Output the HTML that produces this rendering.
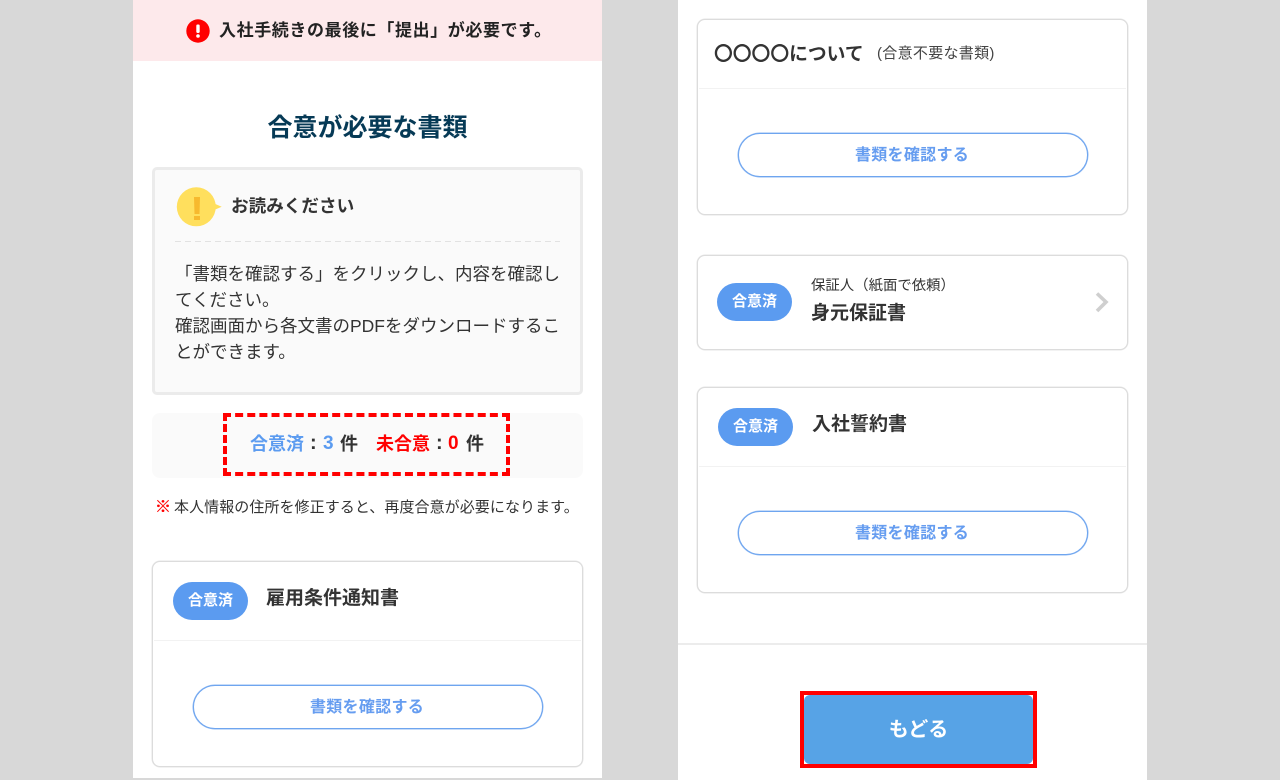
<!DOCTYPE html>
<html lang="ja"><head><meta charset="utf-8">
<style>
html,body{margin:0;padding:0;width:1280px;height:780px;overflow:hidden;background:#d8d8d8}
body{font-family:"Liberation Sans","Noto Sans CJK JP",sans-serif;color:#333;position:relative}
div,span.a{box-sizing:border-box}
.a{position:absolute;white-space:nowrap}
.panel{position:absolute;background:#fff;width:469px}
.card{position:absolute;border:1px solid #dcdcdc;box-shadow:0 0 0 .5px #e6e6e6;border-radius:8px;background:#fff;width:431px}
.line{position:absolute;height:1px;background:#f2f2f2}
.pill{position:absolute;width:75px;height:38px;border-radius:19px;background:#5b9bf0;color:#fff;font-weight:700;font-size:15px;line-height:37px;text-align:center}
.btn{position:absolute;width:350px;height:44px;border:1px solid #6ea5ef;box-shadow:0 0 0 .5px #8fb9f3;border-radius:22px;background:#fff;color:#669df0;font-weight:700;font-size:16px;letter-spacing:.3px;line-height:43px;text-align:center;padding-right:2px}
.t{font-weight:700;font-size:19px;line-height:26px;color:#333}
.s{font-size:18px;font-weight:700;line-height:26px;top:431px}
</style></head><body>

<div class="panel" style="left:133px;top:0;height:778px"></div>
<div class="panel" style="left:678px;top:0;height:780px"></div>

<!-- LEFT -->
<div class="a" style="left:133px;top:0;width:469px;height:61px;background:#fde9eb"></div>
<svg class="a" style="left:186px;top:19px" width="24" height="24" viewBox="0 0 24 24"><circle cx="12" cy="12" r="11.7" fill="#f00"/><rect x="10.300" y="5.500" width="3.400" height="8.500" rx="1.200" fill="#fff"/><circle cx="12" cy="17" r="1.800" fill="#fff"/></svg>
<div class="a" style="left:219px;top:18px;font-size:17px;font-weight:700;line-height:26px;color:#222;letter-spacing:.6px">入社手続きの最後に「提出」が必要です。</div>

<div class="a" style="left:133px;top:111px;width:469px;text-align:center;font-size:25px;font-weight:700;line-height:34px;color:#063a56">合意が必要な書類</div>

<div class="a" style="left:152px;top:167px;width:431px;height:228px;background:#fafafa;border:3px solid #ebebeb;border-radius:5px"></div>
<svg class="a" style="left:176px;top:187px" width="46" height="40" viewBox="0 0 46 40"><circle cx="20.300" cy="19.800" r="19.500" fill="#ffdf5d"/><path d="M37 16L45.700 19.800L37 23.500Z" fill="#ffdf5d"/><path d="M18 10H24L23.500 27H18.500Z" fill="#f7b92e"/><rect x="18" y="29" width="6" height="4" fill="#f7b92e"/></svg>
<div class="a" style="left:231px;top:193px;font-size:17.600px;font-weight:700;line-height:26px;color:#333">お読みください</div>
<div class="a" style="left:175px;top:241px;width:385px;height:1px;background:repeating-linear-gradient(90deg,#e2e2e2 0 6px,transparent 6px 10px)"></div>
<div class="a" style="left:175px;top:261px;width:392px;font-size:17.500px;line-height:26px;color:#333;white-space:nowrap">「書類を確認する」をクリックし、内容を確認し<br>てください。<br>確認画面から各文書のPDFをダウンロードするこ<br>とができます。</div>

<div class="a" style="left:152px;top:413px;width:431px;height:65px;background:#fafafa;border-radius:8px"></div>
<div class="a" style="left:223px;top:413px;width:287px;height:63px;border:4px dashed #f00"></div>
<div class="a s" style="left:250px;color:#5b9bf0">合意済</div>
<div class="a s" style="left:310px;font-size:20px;top:430px">:</div>
<div class="a s" style="left:323px;color:#5b9bf0;font-size:19px">3</div>
<div class="a s" style="left:340px">件</div>
<div class="a s" style="left:376px;color:#f00">未合意</div>
<div class="a s" style="left:436px;font-size:20px;top:430px">:</div>
<div class="a s" style="left:448px;color:#f00;font-size:19px">0</div>
<div class="a s" style="left:466px">件</div>

<div class="a" style="left:155px;top:497px;font-size:16px;line-height:22px;color:#f00;font-weight:700;-webkit-text-stroke:.3px #f00">※</div>
<div class="a" style="left:174px;top:497px;font-size:15px;letter-spacing:.07px;line-height:22px;color:#333">本人情報の住所を修正すると、再度合意が必要になります。</div>

<div class="card" style="left:152px;top:561px;height:206px"></div>
<div class="line" style="left:154px;top:640px;width:427px"></div>
<div class="pill" style="left:173px;top:582px">合意済</div>
<div class="a t" style="left:266px;top:586px">雇用条件通知書</div>
<div class="btn" style="left:193px;top:685px">書類を確認する</div>

<!-- RIGHT -->
<div class="card" style="left:697px;top:19px;height:196px"></div>
<div class="line" style="left:699px;top:88px;width:427px"></div>
<div class="a" style="left:714px;top:39px;font-family:'Noto Sans CJK JP',sans-serif;font-size:18.800px;font-weight:700;line-height:28px;color:#333">〇〇〇〇について</div>
<div class="a" style="left:877px;top:43px;font-size:15px;letter-spacing:.3px;line-height:22px;color:#444">(合意不要な書類)</div>
<div class="btn" style="left:738px;top:133px">書類を確認する</div>

<div class="card" style="left:697px;top:255px;height:95px"></div>
<div class="pill" style="left:717px;top:283px">合意済</div>
<div class="a" style="left:811px;top:276px;font-size:14.400px;line-height:20px;color:#333">保証人（紙面で依頼）</div>
<div class="a t" style="left:811px;top:301px">身元保証書</div>
<svg class="a" style="left:1094px;top:291px" width="16" height="22" viewBox="0 0 16 22"><path d="M3 2.500L12 11L3 20" fill="none" stroke="#cfcfcf" stroke-width="3.600"/></svg>

<div class="card" style="left:697px;top:387px;height:206px"></div>
<div class="line" style="left:699px;top:466px;width:427px"></div>
<div class="pill" style="left:718px;top:408px">合意済</div>
<div class="a t" style="left:812px;top:412px">入社誓約書</div>
<div class="btn" style="left:738px;top:511px">書類を確認する</div>

<div class="a" style="left:678px;top:643px;width:469px;height:2px;background:#ececec"></div>
<div class="a" style="left:800px;top:691px;width:237px;height:77px;border:4px solid #f00;background:#fff"></div>
<div class="a" style="left:804px;top:695px;width:229px;height:69px;background:#57a3e6;border-radius:6px;color:#fff;font-size:20px;font-weight:700;line-height:70px;text-align:center">もどる</div>

</body></html>
